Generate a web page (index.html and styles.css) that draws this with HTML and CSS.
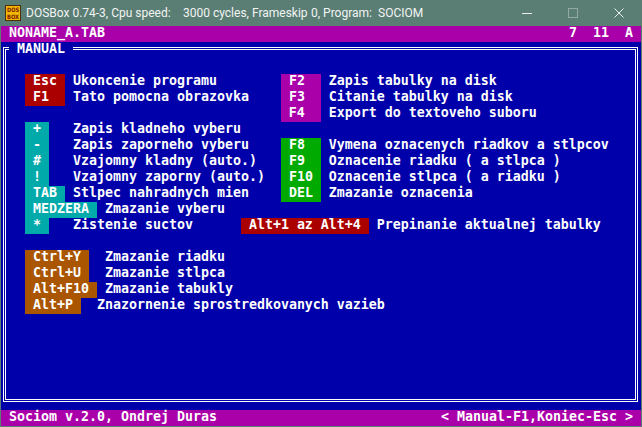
FILE: index.html
```html
<!DOCTYPE html>
<html>
<head>
<meta charset="utf-8">
<link rel="stylesheet" href="styles.css">
</head>
<body>
<div class="window">
  <header class="titlebar">
    <svg class="app-icon" width="16" height="16" viewBox="0 0 16 16">
      <rect x="0" y="0" width="16" height="16" fill="#4b2e0a"/>
      <rect x="1" y="1" width="14" height="14" fill="#f2b705"/>
      <text x="8" y="7" text-anchor="middle" font-size="6" font-weight="bold" fill="#7a1a00" font-family="DejaVu Sans" textLength="12" lengthAdjust="spacingAndGlyphs">DOS</text>
      <text x="8" y="14" text-anchor="middle" font-size="6" font-weight="bold" fill="#7a1a00" font-family="DejaVu Sans" textLength="12" lengthAdjust="spacingAndGlyphs">BOX</text>
    </svg>
    <div class="title">
      <span class="seg seg-a">DOSBox 0.74-3, Cpu speed:</span>
      <span class="seg seg-b">3000 cycles, Frameskip</span>
      <span class="seg seg-c">0, Program:</span>
      <span class="seg">SOCIOM</span>
    </div>
    <div class="controls">
      <div class="ctl"><svg width="10" height="10" viewBox="0 0 10 10"><path d="M0 5.5H10" stroke="#e9efed" stroke-width="1"/></svg></div>
      <div class="ctl"><svg width="10" height="10" viewBox="0 0 10 10"><rect x="0.5" y="0.5" width="9" height="9" fill="none" stroke="#93aaa2" stroke-width="1"/></svg></div>
      <div class="ctl"><svg width="10" height="10" viewBox="0 0 10 10"><path d="M0.5 0.5L9.5 9.5M9.5 0.5L0.5 9.5" stroke="#e9efed" stroke-width="1"/></svg></div>
    </div>
  </header>
  <main class="screen">
    <div class="bar"><span> NONAME_A.TAB</span><span>7  11  A </span></div>
    <div class="desk">
      <div class="box">
        <div class="box-title"> MANUAL </div>
        <div class="row"></div>
        <div class="row">  <span class="k red"> Esc </span> Ukoncenie programu        <span class="k mag"> F2  </span> Zapis tabulky na disk</div>
        <div class="row">  <span class="k red"> F1  </span> Tato pomocna obrazovka    <span class="k mag"> F3  </span> Citanie tabulky na disk</div>
        <div class="row">                                  <span class="k mag"> F4  </span> Export do textoveho suboru</div>
        <div class="row">  <span class="k cyan"> + </span>   Zapis kladneho vyberu</div>
        <div class="row">  <span class="k cyan"> - </span>   Zapis zaporneho vyberu    <span class="k green"> F8  </span> Vymena oznacenych riadkov a stlpcov</div>
        <div class="row">  <span class="k cyan"> # </span>   Vzajomny kladny (auto.)   <span class="k green"> F9  </span> Oznacenie riadku ( a stlpca )</div>
        <div class="row">  <span class="k cyan"> ! </span>   Vzajomny zaporny (auto.)  <span class="k green"> F10 </span> Oznacenie stlpca ( a riadku )</div>
        <div class="row">  <span class="k cyan"> TAB </span> Stlpec nahradnych mien    <span class="k green"> DEL </span> Zmazanie oznacenia</div>
        <div class="row">  <span class="k cyan"> MEDZERA </span> Zmazanie vyberu</div>
        <div class="row">  <span class="k cyan"> * </span>   Zistenie suctov      <span class="k red"> Alt+1 az Alt+4 </span> Prepinanie aktualnej tabulky</div>
        <div class="row"></div>
        <div class="row">  <span class="k brown"> Ctrl+Y </span>  Zmazanie riadku</div>
        <div class="row">  <span class="k brown"> Ctrl+U </span>  Zmazanie stlpca</div>
        <div class="row">  <span class="k brown"> Alt+F10 </span> Zmazanie tabukly</div>
        <div class="row">  <span class="k brown"> Alt+P </span>  Znazornenie sprostredkovanych vazieb</div>
      </div>
    </div>
    <div class="bar"><span> Sociom v.2.0, Ondrej Duras</span><span>&lt; Manual-F1,Koniec-Esc &gt; </span></div>
  </main>
</div>
</body>
</html>
```

FILE: styles.css
```css
html, body {
  margin: 0;
  padding: 0;
}
body {
  background: #5a7e73;
  width: 642px;
  height: 427px;
  overflow: hidden;
}
.window {
  width: 642px;
  height: 427px;
  display: flex;
  flex-direction: column;
  background: #5a7e73;
}
.titlebar {
  height: 26px;
  flex: none;
  display: flex;
  align-items: center;
  padding-left: 5px;
  box-sizing: border-box;
  color: #f2f4f3;
  font-family: Roboto, "Noto Sans", sans-serif;
  font-size: 12px;
}
.app-icon {
  flex: none;
  display: block;
}
.title {
  display: flex;
  margin-left: 5px;
  white-space: pre;
  padding-bottom: 1px;
}
.seg {
  flex: none;
}
.seg-a { width: 157px; }
.seg-b { width: 128px; }
.seg-c { width: 67px; }
.controls {
  margin-left: auto;
  display: flex;
  height: 26px;
}
.ctl {
  width: 46px;
  height: 26px;
  display: flex;
  align-items: center;
  justify-content: center;
}
.ctl svg {
  display: block;
}
.screen {
  width: 640px;
  height: 400px;
  margin-left: 1px;
  flex: none;
  background: #0000aa;
  color: #ffffff;
  font-family: "DejaVu Sans Mono", monospace;
  font-weight: bold;
  font-size: 13.29px;
  line-height: 14px;
  display: flex;
  flex-direction: column;
}
.row {
  display: block;
  height: 16px;
  white-space: pre;
  overflow: visible;
}
.bar {
  display: flex;
  height: 16px;
  flex: none;
  white-space: pre;
  background: #aa00aa;
  justify-content: space-between;
}
.desk {
  height: 368px;
  flex: none;
  padding: 5px 3px 8px 2px;
  box-sizing: border-box;
}
.box {
  position: relative;
  height: 100%;
  border: 3px double #ffffff;
  padding: 8px 2px 5px 3px;
  box-sizing: border-box;
}
.box-title {
  position: absolute;
  top: -8px;
  left: 3px;
  height: 16px;
  white-space: pre;
  background: #0000aa;
}
.k {
  display: inline-block;
  height: 16px;
  vertical-align: top;
}
.red { background: #aa0000; }
.mag { background: #aa00aa; }
.cyan { background: #00aaaa; }
.green { background: #00aa00; }
.brown { background: #aa5500; }
```
